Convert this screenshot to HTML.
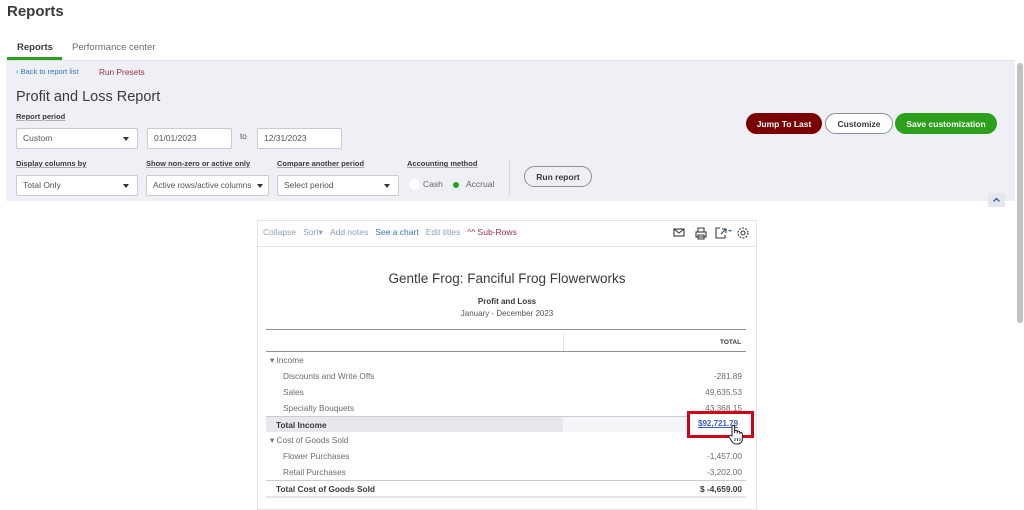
<!DOCTYPE html>
<html><head><meta charset="utf-8"><style>
*{box-sizing:border-box;margin:0;padding:0}
body{width:1024px;height:501px;overflow:hidden;background:#fff;font-family:"Liberation Sans",sans-serif;color:#393a3d;position:relative}
.a{position:absolute;white-space:nowrap}
.panel{position:absolute;left:6px;top:60px;width:1009px;height:141px;background:#eef0f5;border-top:1px solid #dcdfe4}
.lbl{font-size:7.5px;font-weight:bold;color:#393a3d;text-decoration:underline;text-decoration-color:#aaa}
.inp{position:absolute;background:#fff;border:1px solid #c9ccd1;border-radius:2px;height:21px;font-size:8.5px;color:#555;line-height:19px;padding-left:6px}
.inp .c{position:absolute;right:8px;top:8px;width:0;height:0;border-left:3px solid transparent;border-right:3px solid transparent;border-top:4px solid #333}
.btn{position:absolute;border-radius:12px;height:21px;font-size:8.5px;font-weight:bold;display:flex;align-items:center;justify-content:center}
.row{position:absolute;left:266px;width:480px;height:16px;font-size:8.3px;color:#6b6c72}
.row span{position:absolute;top:3px}
.row .v{right:4px}
.tb span{margin-right:7px}
</style></head><body>
<div class="a" style="left:7px;top:3px;font-size:15px;font-weight:bold;color:#393a3d">Reports</div>
<div class="a" style="left:17px;top:42px;font-size:9.5px;font-weight:bold;color:#393a3d">Reports</div>
<div class="a" style="left:72px;top:42px;font-size:9.5px;color:#6b6c72">Performance center</div>
<div class="a" style="left:7px;top:57px;width:55px;height:3px;background:#2ca01c"></div>
<div class="panel"></div>
<div class="a" style="left:16px;top:67px;font-size:7.5px;color:#3a73c4">&#8249; Back to report list</div>
<div class="a" style="left:99px;top:67px;font-size:8.3px;color:#a03046">Run Presets</div>
<div class="a" style="left:16px;top:89px;font-size:14.5px;color:#393a3d">Profit and Loss Report</div>
<div class="a lbl" style="left:16px;top:112px">Report period</div>
<div class="inp" style="left:16px;top:128px;width:122px">Custom<i class="c"></i></div>
<div class="inp" style="left:147px;top:128px;width:85px">01/01/2023</div>
<div class="a" style="left:240px;top:132px;font-size:8px;color:#555">to</div>
<div class="inp" style="left:257px;top:128px;width:85px">12/31/2023</div>
<div class="a lbl" style="left:16px;top:159px">Display columns by</div>
<div class="a lbl" style="left:146px;top:159px">Show non-zero or active only</div>
<div class="a lbl" style="left:277px;top:159px">Compare another period</div>
<div class="a lbl" style="left:407px;top:159px">Accounting method</div>
<div class="inp" style="left:16px;top:175px;width:122px">Total Only<i class="c"></i></div>
<div class="inp" style="left:146px;top:175px;width:123px;font-size:8.2px">Active rows/active columns<i class="c" style="right:5px"></i></div>
<div class="inp" style="left:277px;top:175px;width:122px">Select period<i class="c"></i></div>
<div class="a" style="left:409px;top:179px;width:11px;height:11px;border-radius:50%;background:#fff"></div>
<div class="a" style="left:423px;top:179px;font-size:8.5px;color:#666">Cash</div>
<div class="a" style="left:453px;top:182px;width:6px;height:6px;border-radius:50%;background:#2ca01c"></div>
<div class="a" style="left:466px;top:179px;font-size:8.5px;color:#666">Accrual</div>
<div class="a" style="left:509px;top:159px;width:1px;height:36px;background:#d4d7dc"></div>
<div class="btn" style="left:524px;top:166px;width:68px;border:1px solid #8d9096;background:transparent;color:#393a3d">Run report</div>
<div class="btn" style="left:746px;top:113px;width:76px;background:#7a0000;color:#fff">Jump To Last</div>
<div class="btn" style="left:825px;top:113px;width:68px;border:1px solid #8d9096;background:#fff;color:#393a3d">Customize</div>
<div class="btn" style="left:895px;top:113px;width:102px;background:#2ca01c;color:#fff">Save customization</div>
<div class="a" style="left:988px;top:193px;width:17px;height:14px;background:#e4e7ee;border-radius:2px"></div>
<svg class="a" style="left:992px;top:196px" width="9" height="8" viewBox="0 0 9 8"><path d="M1.5 5.5l3-3 3 3" fill="none" stroke="#3a5fa8" stroke-width="1.4"/></svg>
<div class="a" style="left:1017px;top:63px;width:6px;height:260px;background:#c1c1c1;border-radius:3px"></div>
<div class="a" style="left:257px;top:220px;width:500px;height:290px;border:1px solid #e3e5e8;background:#fff"></div>
<div class="a" style="left:257px;top:246px;width:500px;height:1px;background:#e3e5e8"></div>
<div class="a tb" style="left:263px;top:227px;font-size:8.5px;color:#8d9eb4"><span>Collapse</span><span>Sort&#9662;</span><span>Add notes</span><span style="color:#3a73c4">See a chart</span><span>Edit titles</span><span style="color:#a03046">^^ Sub-Rows</span></div>
<svg class="a" style="left:672px;top:225px" width="80" height="16" viewBox="0 0 80 16" fill="none" stroke="#393a3d" stroke-width="1.1">
<rect x="2" y="4" width="10" height="7"/><path d="M2 4l5 4 5-4"/>
<rect x="24" y="7" width="10" height="5"/><path d="M26 7V3h6v4M26 10h6v4h-6z"/>
<path d="M48 3h-4v10h9v-3M50 4h4v4M54 4l-5 5"/><path d="M56 5h4l-2 2z" fill="#3a73c4" stroke="none"/>
<circle cx="71" cy="8" r="2"/><circle cx="71" cy="8" r="5" stroke-dasharray="2 1.2"/>
</svg>
<div class="a" style="left:257px;top:271px;width:500px;text-align:center;font-size:13.5px;color:#393a3d">Gentle Frog: Fanciful Frog Flowerworks</div>
<div class="a" style="left:257px;top:297px;width:500px;text-align:center;font-size:8px;font-weight:bold;color:#393a3d">Profit and Loss</div>
<div class="a" style="left:257px;top:309px;width:500px;text-align:center;font-size:8px;color:#555">January - December 2023</div>
<div class="a" style="left:266px;top:329px;width:480px;height:1px;background:#8d9096"></div>
<div class="a" style="left:563px;top:333px;width:1px;height:18px;background:#e3e5e8"></div>
<div class="a" style="left:720px;top:339px;font-size:6.5px;font-weight:bold;color:#393a3d">TOTAL</div>
<div class="a" style="left:266px;top:351px;width:480px;height:1px;background:#8d9096"></div>
<div class="row" style="top:352px"><span style="left:4px">&#9662; Income</span></div>
<div class="row" style="top:368px"><span style="left:17px">Discounts and Write Offs</span><span class="v">-281.89</span></div>
<div class="row" style="top:384px"><span style="left:17px">Sales</span><span class="v">49,635.53</span></div>
<div class="row" style="top:400px"><span style="left:17px">Specialty Bouquets</span><span class="v">43,368.15</span></div>
<div class="row" style="top:416px;border-top:1px solid #c9ccd1;background:linear-gradient(90deg,#e6e8ed 0,#e6e8ed 297px,#f4f5f7 297px)"><span style="left:10px;font-weight:bold;color:#393a3d">Total Income</span></div>
<div class="a" style="left:687px;top:411px;width:67px;height:27px;border:3px solid #d0021b;background:#fff"></div>
<div class="a" style="left:698px;top:419px;font-size:8px;font-weight:bold;color:#3a5fc0;text-decoration:underline">$92,721.79</div>
<svg class="a" style="left:727px;top:423px" width="18" height="22" viewBox="0 0 18 22"><path d="M5 13V3.5a1.3 1.3 0 0 1 2.6 0V10V8.5a1.3 1.3 0 0 1 2.6 0V10.5V9.3a1.3 1.3 0 0 1 2.6 0v1.5a1.3 1.3 0 0 1 2.6 0V16c0 3-2 5-5 5H9c-2 0-3-1-4-2.5L2 14a1.3 1.3 0 0 1 2-1.5z" fill="#fff" stroke="#222" stroke-width="1"/><path d="M8 15v3M10.5 15v3M13 15v3" stroke="#222" stroke-width=".8"/></svg>
<div class="row" style="top:432px"><span style="left:4px">&#9662; Cost of Goods Sold</span></div>
<div class="row" style="top:448px"><span style="left:17px">Flower Purchases</span><span class="v">-1,457.00</span></div>
<div class="row" style="top:464px"><span style="left:17px">Retail Purchases</span><span class="v">-3,202.00</span></div>
<div class="row" style="top:480px;border-top:1px solid #c9ccd1;border-bottom:2px solid #e3e5e8;height:18px"><span style="left:10px;font-weight:bold;color:#393a3d">Total Cost of Goods Sold</span><span class="v" style="font-weight:bold;color:#393a3d">$ -4,659.00</span></div>
</body></html>
